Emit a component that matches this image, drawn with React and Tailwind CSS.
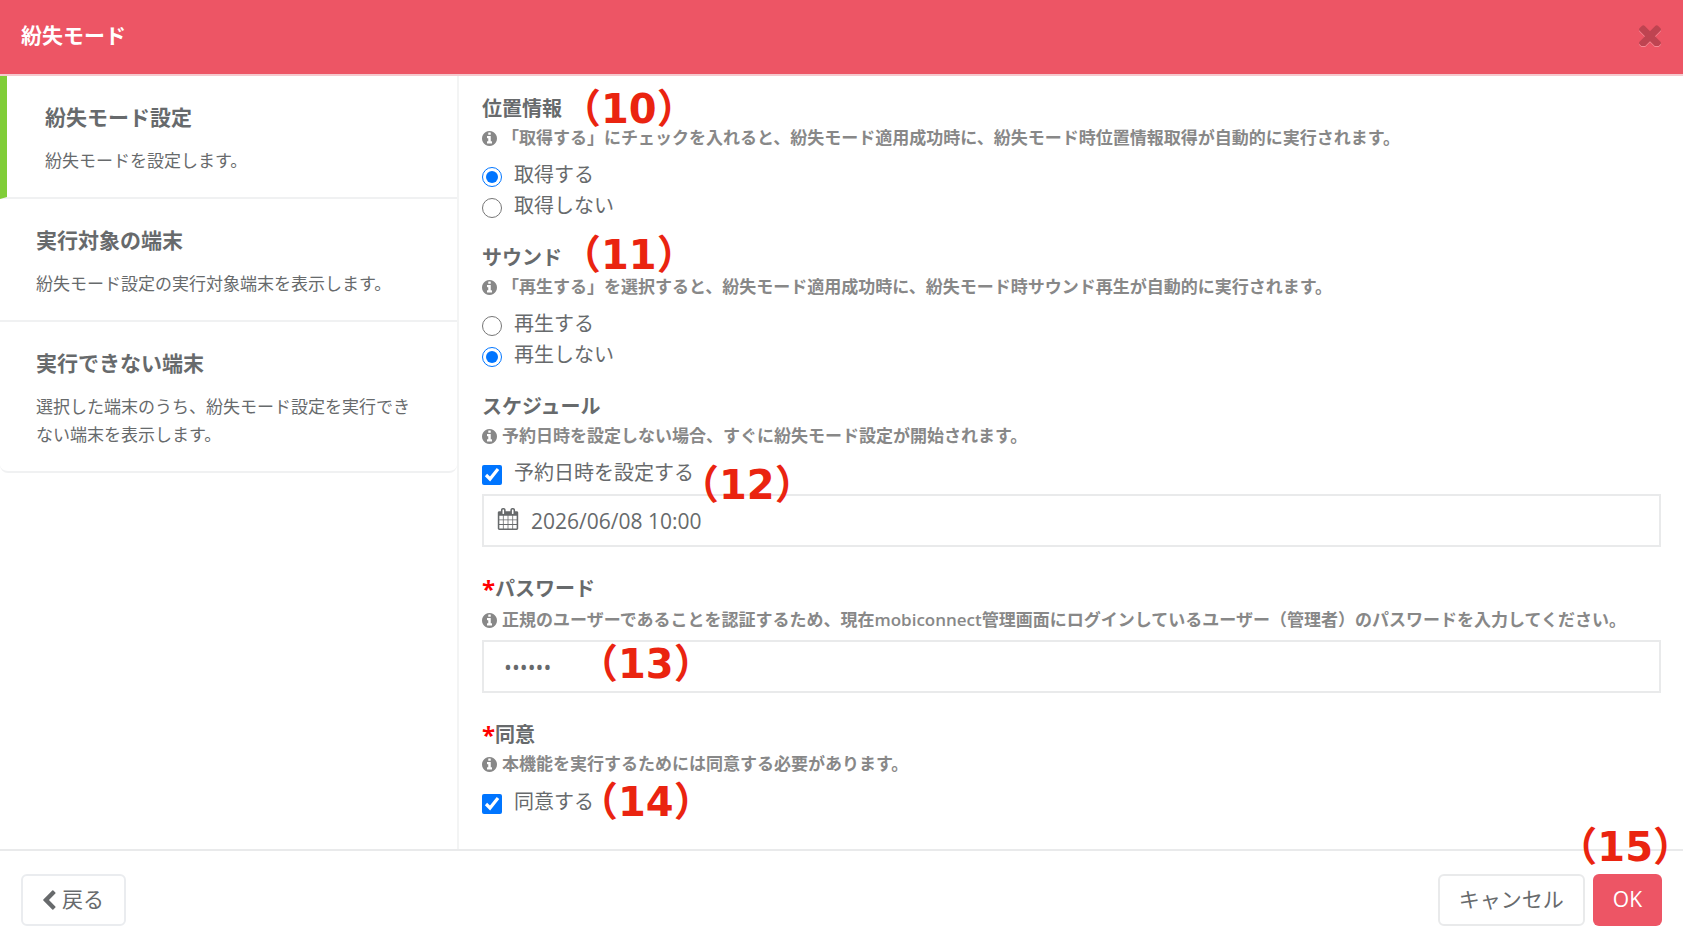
import React, { useState } from "react";

const ICONS = {
  info: {
    box: "128 128 1536 1536",
    d: "M1152 1376v-160q0-14-9-23t-23-9h-96v-512q0-14-9-23t-23-9h-320q-14 0-23 9t-9 23v160q0 14 9 23t23 9h96v320h-96q-14 0-23 9t-9 23v160q0 14 9 23t23 9h448q14 0 23-9t9-23zm-128-896v-160q0-14-9-23t-23-9h-192q-14 0-23 9t-9 23v160q0 14 9 23t23 9h192q14 0 23-9t9-23zm640 416q0 209-103 385.5t-279.5 279.5-385.5 103-385.5-103-279.5-279.5-103-385.5 103-385.5 279.5-279.5 385.5-103 385.5 103 279.5 279.5 103 385.5z",
  },
  calendar: {
    box: "0 0 1792 1792",
    d: "M192 1664h288v-288h-288v288zm352 0h320v-288h-320v288zm-352-352h288v-320h-288v320zm352 0h320v-320h-320v320zm-352-384h288v-288h-288v288zm736 736h320v-288h-320v288zm-384-736h320v-288h-320v288zm768 736h288v-288h-288v288zm-384-352h320v-320h-320v320zm-352-864v-288q0-13-9.5-22.5t-22.5-9.5h-64q-13 0-22.5 9.5t-9.5 22.5v288q0 13 9.5 22.5t22.5 9.5h64q13 0 22.5-9.5t9.5-22.5zm736 864h288v-320h-288v320zm-384-384h320v-288h-320v288zm384 0h288v-288h-288v288zm32-480v-288q0-13-9.5-22.5t-22.5-9.5h-64q-13 0-22.5 9.5t-9.5 22.5v288q0 13 9.5 22.5t22.5 9.5h64q13 0 22.5-9.5t9.5-22.5zm384-64v1280q0 52-38 90t-90 38h-1408q-52 0-90-38t-38-90v-1280q0-52 38-90t90-38h128v-96q0-66 47-113t113-47h64q66 0 113 47t47 113v96h384v-96q0-66 47-113t113-47h64q66 0 113 47t47 113v96h128q52 0 90 38t38 90z",
  },
  times: {
    box: "302 302 1188 1188",
    d: "M1490 1322q0 40-28 68l-136 136q-28 28-68 28t-68-28l-294-294-294 294q-28 28-68 28t-68-28l-136-136q-28-28-28-68t28-68l294-294-294-294q-28-28-28-68t28-68l136-136q28-28 68-28t68 28l294 294 294-294q28-28 68-28t68 28l136 136q28 28 28 68t-28 68l-294 294 294 294q28 28 28 68z",
  },
  back: {
    box: "400 0 1080 1664",
    d: "M1427 301l-531 531 531 531q19 19 19 45t-19 45l-166 166q-19 19-45 19t-45-19l-742-742q-19-19-19-45t19-45l742-742q19-19 45-19t45 19l166 166q19 19 19 45t-19 45z",
  },
};

function Icon({ name, className }) {
  return (
    <svg viewBox={ICONS[name].box} fill="currentColor" aria-hidden="true" className={className}>
      <path d={ICONS[name].d} />
    </svg>
  );
}

function Callout({ children, className }) {
  return (
    <span
      className={`pointer-events-none absolute z-10 whitespace-nowrap font-['DejaVu_Sans','Noto_Sans_CJK_JP',sans-serif] text-[40px] leading-8 font-bold text-[#ea2410] [font-feature-settings:'halt'] ${className}`}
    >
      {children}
    </span>
  );
}

function Step({ title, children, active }) {
  return (
    <li
      className={`border-b-2 border-[#f0f1f2] pt-[26px] pr-9 pb-[22px] last:rounded-b-lg ${
        active ? "border-l-[7px] border-l-[#80cd38] pl-[38px]" : "pl-9"
      }`}
    >
      <h2 className="mb-[15px] text-[21px] leading-[30px] font-bold">{title}</h2>
      <p className="text-[17px] leading-7">{children}</p>
    </li>
  );
}

function Heading({ children, required, callout, htmlFor }) {
  const Tag = htmlFor ? "label" : "h3";
  return (
    <Tag htmlFor={htmlFor} className="relative flex h-[30px] items-center text-xl leading-[30px] font-bold">
      {required && <span className="text-2xl leading-[30px] text-[#ff0000]">*</span>}
      {children}
      {callout}
    </Tag>
  );
}

function Help({ children }) {
  return (
    <p className="flex items-center gap-[5px] text-[17px] leading-7 font-semibold text-[#888888]">
      <Icon name="info" className="size-[15px] shrink-0" />
      <span>{children}</span>
    </p>
  );
}

function Choice({ children, callout, ...input }) {
  return (
    <label className="relative flex h-[31px] items-center text-xl leading-[31px]">
      <input {...input} className="mt-1 mr-3 size-5 shrink-0 accent-[#0075ff]" />
      {children}
      {callout}
    </label>
  );
}

export default function App() {
  const [location, setLocation] = useState("get");
  const [sound, setSound] = useState("mute");
  const [reserve, setReserve] = useState(true);
  const [agree, setAgree] = useState(true);

  return (
    <div className="flex min-h-screen flex-col bg-white font-['Open_Sans','Noto_Sans_CJK_JP',sans-serif] text-[#676a6c]">
      <header className="flex items-center justify-between border-b-2 border-[#f5c9ce] bg-[#ed5565] pt-5 pr-[22px] pb-6 pl-[21px]">
        <h1 className="text-[21px] leading-[30px] font-bold text-white">紛失モード</h1>
        <button type="button" aria-label="閉じる" className="text-[#be4451]">
          <Icon name="times" className="size-[22px] drop-shadow-[0_1px_0_#f58a96]" />
        </button>
      </header>

      <div className="flex grow">
        <nav className="w-[459px] shrink-0 border-r-2 border-[#f3f4f4]">
          <ol>
            <Step title="紛失モード設定" active>
              紛失モードを設定します。
            </Step>
            <Step title="実行対象の端末">紛失モード設定の実行対象端末を表示します。</Step>
            <Step title="実行できない端末">
              選択した端末のうち、紛失モード設定を実行できない端末を表示します。
            </Step>
          </ol>
        </nav>

        <main className="min-w-0 grow pt-[18px] pr-[22px] pb-[29px] pl-[23px]">
          <section className="mb-[22px]">
            <Heading callout={<Callout className="-top-px left-[99px]">（10）</Callout>}>位置情報</Heading>
            <Help>「取得する」にチェックを入れると、紛失モード適用成功時に、紛失モード時位置情報取得が自動的に実行されます。</Help>
            <div className="mt-[7px]">
              <Choice type="radio" name="location" checked={location === "get"} onChange={() => setLocation("get")}>
                取得する
              </Choice>
              <Choice type="radio" name="location" checked={location === "skip"} onChange={() => setLocation("skip")}>
                取得しない
              </Choice>
            </div>
          </section>

          <section className="mb-[22px]">
            <Heading callout={<Callout className="-top-1 left-[99px]">（11）</Callout>}>サウンド</Heading>
            <Help>「再生する」を選択すると、紛失モード適用成功時に、紛失モード時サウンド再生が自動的に実行されます。</Help>
            <div className="mt-[7px]">
              <Choice type="radio" name="sound" checked={sound === "play"} onChange={() => setSound("play")}>
                再生する
              </Choice>
              <Choice type="radio" name="sound" checked={sound === "mute"} onChange={() => setSound("mute")}>
                再生しない
              </Choice>
            </div>
          </section>

          <section className="mb-[27px]">
            <Heading>スケジュール</Heading>
            <Help>予約日時を設定しない場合、すぐに紛失モード設定が開始されます。</Help>
            <div className="mt-[7px] mb-1.5">
              <Choice
                type="checkbox"
                checked={reserve}
                onChange={(e) => setReserve(e.target.checked)}
                callout={<Callout className="top-3 left-[217px]">（12）</Callout>}
              >
                予約日時を設定する
              </Choice>
            </div>
            <div className="flex h-[53px] items-center border-2 border-[#e9eaeb] pl-[13px]">
              <Icon name="calendar" className="mb-1 size-[22px] shrink-0" />
              <input
                type="text"
                aria-label="予約日時"
                defaultValue="2026/06/08 10:00"
                className="ml-3 h-full min-w-0 grow text-[21px] outline-none"
              />
            </div>
          </section>

          <section className="mb-[27px]">
            <Heading required htmlFor="password">
              パスワード
            </Heading>
            <div className="mt-0.5 mb-1.5">
              <Help>
                正規のユーザーであることを認証するため、現在mobiconnect管理画面にログインしているユーザー（管理者）のパスワードを入力してください。
              </Help>
            </div>
            <div className="relative">
              <input
                id="password"
                type="password"
                defaultValue="secret"
                className="block h-[53px] w-full border-2 border-[#e9eaeb] px-5 text-[21px] outline-none"
              />
              <Callout className="top-2 left-[116px]">（13）</Callout>
            </div>
          </section>

          <section>
            <Heading required>同意</Heading>
            <Help>本機能を実行するためには同意する必要があります。</Help>
            <div className="mt-2">
              <Choice
                type="checkbox"
                checked={agree}
                onChange={(e) => setAgree(e.target.checked)}
                callout={<Callout className="left-[116px]">（14）</Callout>}
              >
                同意する
              </Choice>
            </div>
          </section>
        </main>
      </div>

      <footer className="relative flex items-center justify-between border-t-2 border-[#e9eaeb] px-[21px] pt-[23px] pb-3 text-[21px]">
        <button type="button" className="flex h-[52px] items-center gap-1.5 rounded-md border-2 border-[#eaecef] px-5">
          <Icon name="back" className="h-5 w-[13px]" />
          戻る
        </button>
        <div className="flex gap-2">
          <button type="button" className="h-[52px] rounded-md border-2 border-[#e9eaeb] px-[19px]">
            キャンセル
          </button>
          <button type="button" className="h-[52px] rounded-md bg-[#ed5565] px-5 text-white">
            OK
          </button>
        </div>
        <Callout className="-top-5 right-2.5">（15）</Callout>
      </footer>
    </div>
  );
}
